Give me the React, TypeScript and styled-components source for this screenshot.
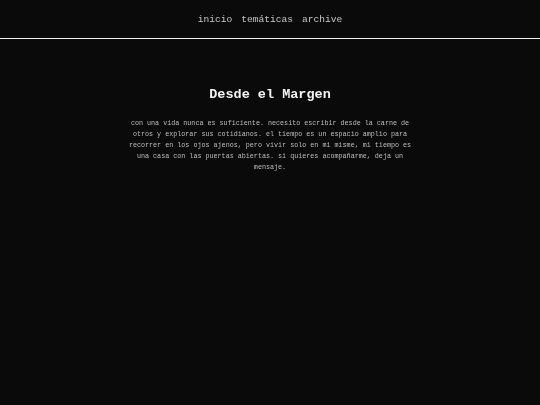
import React from 'react';
import styled, { createGlobalStyle } from 'styled-components';

const GlobalStyle = createGlobalStyle`
  html, body {
    margin: 0;
    padding: 0;
    background: #0a0a0a;
    min-height: 100%;
  }
  body {
    font-family: "Liberation Mono", "DejaVu Sans Mono", monospace;
    -webkit-font-smoothing: antialiased;
  }
`;

const Page = styled.div`
  min-height: 405px;
  background: #0a0a0a;
  color: #c8c8c8;
  /* keep the small text grey, no colour fringes */
  filter: grayscale(1);
`;

const Header = styled.header`
  height: 38px;
  display: flex;
  align-items: center;
  justify-content: center;
  border-bottom: 1px solid #f0f0f0;
`;

const Nav = styled.nav`
  display: flex;
  gap: 9px;
`;

const NavLink = styled.a`
  font-size: 9.6px;
  color: #c8c8c8;
  text-decoration: none;
  cursor: pointer;
`;

const Main = styled.main`
  display: flex;
  flex-direction: column;
  align-items: center;
  padding-top: 48px;
`;

const Title = styled.h1`
  margin: 0;
  font-size: 13.5px;
  line-height: 16px;
  font-weight: bold;
  color: #f4f4f4;
`;

const Intro = styled.p`
  margin: 15px 0 0;
  width: 290px;
  font-size: 6.72px;
  line-height: 11px;
  text-align: center;
  color: #bdbdbd;
`;

const links = ['inicio', 'temáticas', 'archive'];

function App() {
  return (
    <Page>
      <GlobalStyle />
      <Header>
        <Nav>
          {links.map((l) => (
            <NavLink key={l}>{l}</NavLink>
          ))}
        </Nav>
      </Header>
      <Main>
        <Title>Desde el Margen</Title>
        <Intro>
          con una vida nunca es suficiente. necesito escribir desde la carne de otros y
          explorar sus cotidianos. el tiempo es un espacio amplio para recorrer en los
          ojos ajenos, pero vivir solo en mi misme, mi tiempo es una casa con las puertas
          abiertas. si quieres acompañarme, deja un mensaje.
        </Intro>
      </Main>
    </Page>
  );
}

export default App;
